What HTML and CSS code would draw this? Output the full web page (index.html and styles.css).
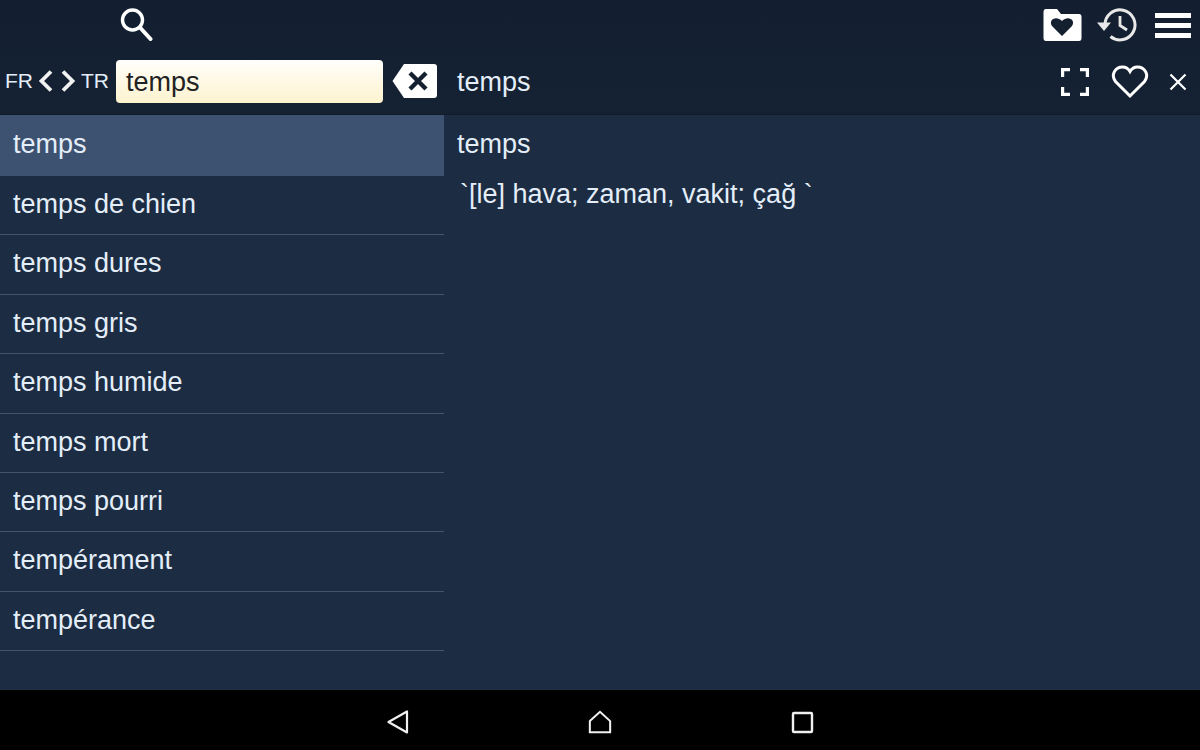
FILE: index.html
```html
<!DOCTYPE html>
<html lang="en">
<head>
    <meta charset="UTF-8">
    <title>Dictionary</title>
    <link rel="stylesheet" href="styles.css">
</head>
<body>
<div id="page">
    <header class="head">
        <div class="headLeft">
            <div class="topLeft">
                <svg class="searchIcon" viewBox="0 0 34 34"><circle cx="13.500" cy="13" r="10" fill="none" stroke="#fff" stroke-width="3.400"/><path d="M21 20.500 L31.500 32" stroke="#fff" stroke-width="4" stroke-linecap="round"/></svg>
            </div>
            <div class="searchRow">
                <span class="lang">FR</span>
                <svg class="arrow" viewBox="0 0 16 24"><path d="M13 2.500 L3.500 12 L13 21.500" fill="none" stroke="#f2f2f2" stroke-width="3.800"/></svg>
                <svg class="arrow arrowRight" viewBox="0 0 16 24"><path d="M3 2.500 L12.500 12 L3 21.500" fill="none" stroke="#f2f2f2" stroke-width="3.800"/></svg>
                <span class="lang">TR</span>
                <div class="input">temps</div>
                <svg class="clearIcon" viewBox="0 0 46 36"><path d="M12 1 H42 Q45 1 45 4 V32 Q45 35 42 35 H12 L0.500 18 Z" fill="#fff"/><path d="M18 10 L34 26 M34 10 L18 26" stroke="#14202f" stroke-width="4.400"/></svg>
            </div>
        </div>
        <div class="headRight">
            <div class="topRight">
                <svg class="folderIcon" viewBox="0 0 40 32"><path d="M4 0 H15 L19 5 H37 Q39.500 5 39.500 8 V29 Q39.500 32 37 32 H4 Q1.500 32 1.500 29 V3 Q1.500 0 4 0 Z" fill="#fff"/><path d="M20 27 L10 17 C6 11 14 6 20 12 C26 6 34 11 30 17 Z" fill="#14202f"/></svg>
                <svg class="historyIcon" viewBox="0 0 42 36"><path d="M9 18 A15 15 0 1 1 14.500 29.500" fill="none" stroke="#e8e8e8" stroke-width="3"/><path d="M1 15.500 H15 L8 24 Z" fill="#e8e8e8"/><path d="M24 9 V18.500 L31 23" fill="none" stroke="#e8e8e8" stroke-width="2.800"/></svg>
                <div class="menuIcon"><i></i><i></i><i></i></div>
            </div>
            <div class="titleRow">
                <span class="title">temps</span>
                <svg class="fullIcon" viewBox="0 0 28 28"><path d="M1.500 9 V1.500 H9 M19 1.500 H26.500 V9 M26.500 19 V26.500 H19 M9 26.500 H1.500 V19" fill="none" stroke="#fff" stroke-width="3.400"/></svg>
                <svg class="heartIcon" viewBox="0 0 38 34"><path d="M19 31 L4.500 16.500 C-1 9 5 2 11.500 2 C15 2 17.500 4 19 6.500 C20.500 4 23 2 26.500 2 C33 2 39 9 33.500 16.500 Z" fill="none" stroke="#fff" stroke-width="3"/></svg>
                <svg class="closeIcon" viewBox="0 0 18 18"><path d="M1.500 1.500 L16.500 16.500 M16.500 1.500 L1.500 16.500" stroke="#fff" stroke-width="2.200"/></svg>
            </div>
        </div>
    </header>
    <main class="content">
        <ul class="wordList">
            <li class="active">temps</li>
            <li>temps de chien</li>
            <li>temps dures</li>
            <li>temps gris</li>
            <li>temps humide</li>
            <li>temps mort</li>
            <li>temps pourri</li>
            <li>tempérament</li>
            <li>tempérance</li>
        </ul>
        <div class="detail">
            <div class="word">temps</div>
            <div class="meaning">`[le] hava; zaman, vakit; çağ `</div>
        </div>
    </main>
    <footer class="navBar">
        <svg class="navIcon" viewBox="0 0 24 26"><path d="M21 2.500 V23.500 L2.500 13 Z" fill="none" stroke="#f0f0f0" stroke-width="2.200" stroke-linejoin="round"/></svg>
        <svg class="navIcon" viewBox="0 0 26 26"><path d="M2 12 L13 2 L24 12 V24 H2 Z" fill="none" stroke="#f0f0f0" stroke-width="2.200"/></svg>
        <svg class="navIcon" viewBox="0 0 24 26"><rect x="3" y="4" width="19" height="19" fill="none" stroke="#f0f0f0" stroke-width="2.400" rx="1"/></svg>
    </footer>
</div>
</body>
</html>
```

FILE: styles.css
```css
html, body {
    margin: 0;
    height: 100%;
}

body {
    font-family: "Liberation Sans", Arial, sans-serif;
    background: #1c2c42;
}

#page {
    display: flex;
    flex-direction: column;
    height: 750px;
    overflow: hidden;
}

.head {
    display: flex;
    flex: none;
    height: 114px;
    background: linear-gradient(#131f30, #152234);
    border-bottom: 1px solid #101a28;
    color: #fff;
}

.headLeft {
    flex: none;
    width: 444px;
}

.topLeft {
    display: flex;
    height: 56px;
    padding-left: 119px;
    padding-top: 7px;
    box-sizing: border-box;
}

.searchIcon {
    width: 34px;
    height: 34px;
}

.searchRow {
    display: flex;
    align-items: center;
    height: 50px;
    padding-left: 5px;
}

.lang {
    font-size: 21px;
    color: #e4eef9;
}

.arrow {
    width: 16px;
    height: 24px;
    margin-left: 5px;
}

.arrowRight {
    margin-left: 6px;
    margin-right: 5px;
}

.input {
    width: 267px;
    height: 43px;
    margin-left: 7px;
    padding-left: 10px;
    box-sizing: border-box;
    border-radius: 4px;
    background: linear-gradient(#fffefa, #fdf3cf);
    color: #222;
    font-size: 27px;
    line-height: 44px;
}

.clearIcon {
    width: 46px;
    height: 36px;
    margin-left: 9px;
}

.headRight {
    flex: 1;
}

.topRight {
    display: flex;
    align-items: center;
    justify-content: flex-end;
    height: 50px;
    padding-right: 9px;
}

.folderIcon {
    width: 40px;
    height: 32px;
}

.historyIcon {
    width: 42px;
    height: 36px;
    margin-left: 14px;
}

.menuIcon {
    width: 36px;
    margin-left: 17px;
}

.menuIcon i {
    display: block;
    height: 5px;
    background: #fff;
    margin: 5px 0;
}

.titleRow {
    display: flex;
    align-items: center;
    height: 64px;
    padding-left: 13px;
    padding-right: 13px;
}

.title {
    flex: 1;
    font-size: 27px;
    color: #e4eef9;
}

.fullIcon {
    width: 28px;
    height: 28px;
}

.heartIcon {
    width: 38px;
    height: 34px;
    margin-left: 22px;
}

.closeIcon {
    width: 18px;
    height: 18px;
    margin-left: 20px;
}

.content {
    display: flex;
    flex: 1;
    min-height: 0;
}

.wordList {
    flex: none;
    width: 444px;
    margin: 0;
    padding: 0;
    list-style: none;
}

.wordList li {
    height: 58.400px;
    padding-left: 13px;
    border-bottom: 1px solid #41546e;
    color: #e4eef9;
    font-size: 27px;
    line-height: 57px;
}

.wordList .active {
    height: 61px;
    background: #3d5170;
    border-bottom: 0;
    line-height: 59px;
}

.detail {
    flex: 1;
    padding-left: 13px;
    color: #e4eef9;
    font-size: 27px;
}

.word {
    line-height: 59px;
}

.meaning {
    padding-left: 3px;
    line-height: 40px;
}

.navBar {
    display: flex;
    flex: none;
    justify-content: center;
    align-items: center;
    gap: 178px;
    height: 60px;
    padding-top: 4px;
    box-sizing: border-box;
    background: #000;
}

.navIcon {
    width: 24px;
    height: 26px;
}
```
